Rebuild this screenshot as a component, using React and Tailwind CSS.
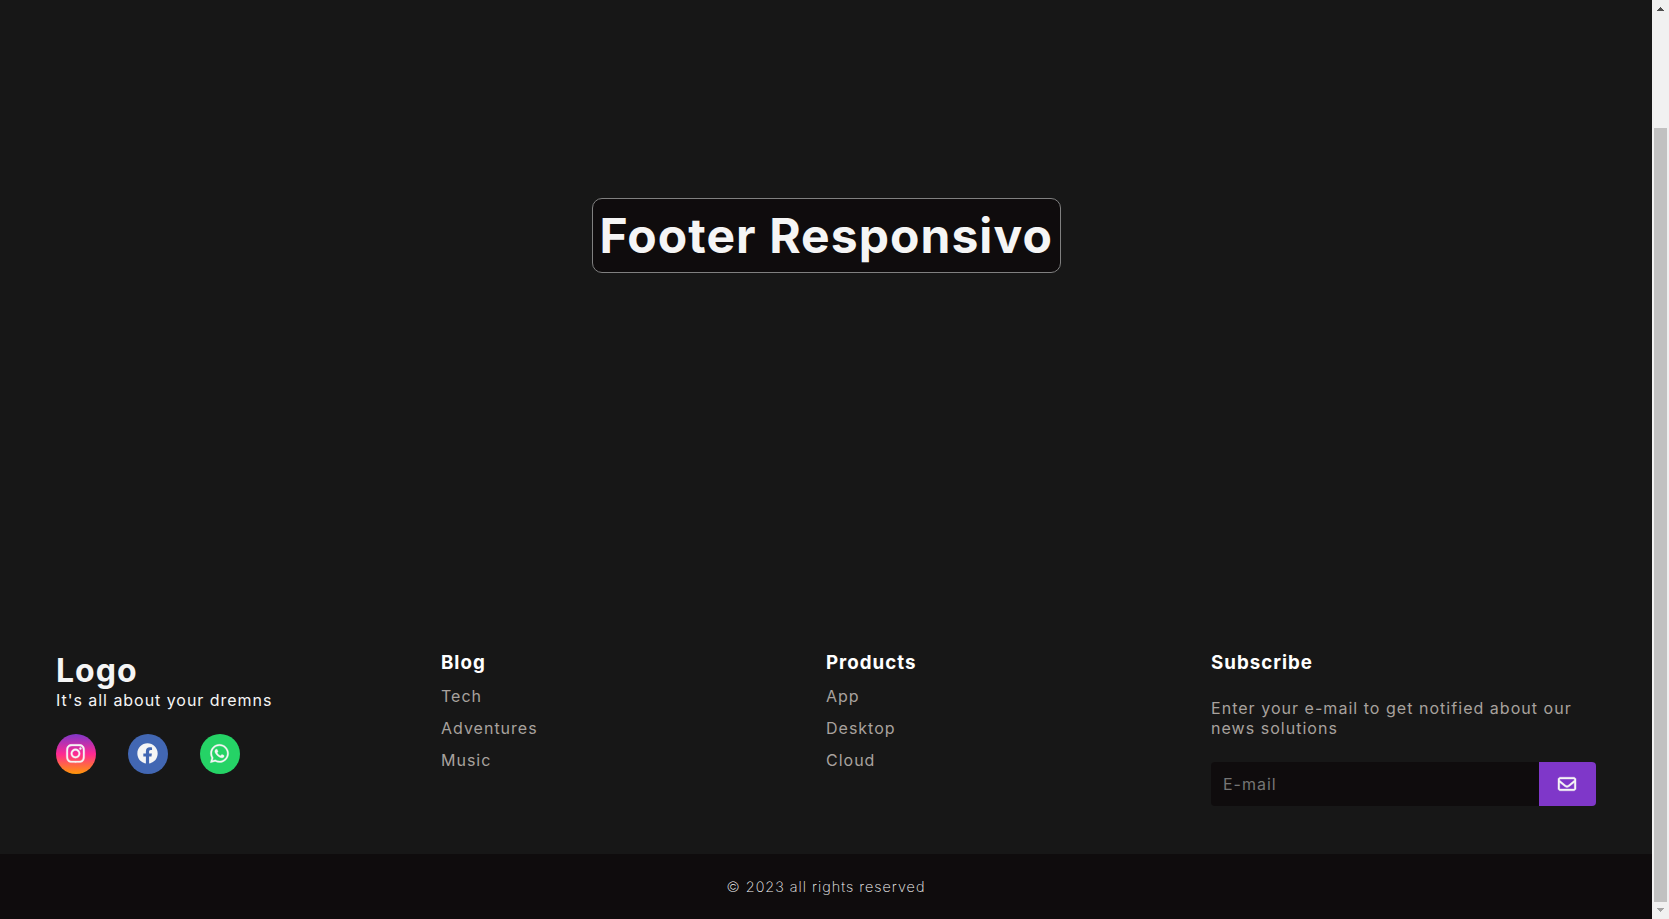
import { FaInstagram, FaWhatsapp, FaRegEnvelope } from "react-icons/fa6";
import { FaFacebook } from "react-icons/fa";

function LinkColumn({ title, links }) {
  return (
    <div className="flex w-[385px] flex-col pt-[1px]">
      <h3 className="h-[23px] text-[18.72px] font-bold leading-[23px] text-white">{title}</h3>
      <ul className="mt-[13px] flex flex-col gap-[13px]">
        {links.map((l) => (
          <li key={l} className="h-[19px] leading-[19px] text-[#a8a29e]">{l}</li>
        ))}
      </ul>
    </div>
  );
}

function Scrollbar() {
  return (
    <div className="flex w-[17px] flex-col items-center bg-[#f1f1f1]">
      <svg width="17" height="17" viewBox="0 0 17 17" fill="#505050" shapeRendering="crispEdges">
        <path d="M8 7h1v1h1v1h1v1h1v1H5v-1h1V9h1V8h1z" />
      </svg>
      <div className="mt-[111px] h-[774px] w-[13px] bg-[#c1c1c1]" />
      <svg width="17" height="17" viewBox="0 0 17 17" fill="#a3a3a3" shapeRendering="crispEdges">
        <path d="M5 6h7v1h-1v1h-1v1H9v1H8V9H7V8H6V7H5z" />
      </svg>
    </div>
  );
}

export default function App() {
  return (
    <div className="flex h-[919px] w-[1669px] overflow-hidden font-['Inter',sans-serif] text-[16px] tracking-[1px]">
      <div className="flex w-[1652px] flex-col bg-[#171717]">
        <main className="flex h-[650px] justify-center pt-[198px]">
          <h1 className="flex h-[75px] w-[469px] items-center whitespace-nowrap rounded-[10px] border border-[#808080] bg-[#0f0c0d] pl-[7px] text-[48px] font-bold leading-[58px] tracking-[1.05px] text-[#f5f5f5]">
            Footer Responsivo
          </h1>
        </main>
        <footer className="flex flex-1 flex-col">
          <div className="flex h-[204px] px-[56px]">
            <div className="flex w-[385px] flex-col text-[#f5f5f5]">
              <h2 className="mt-[1px] h-[39px] text-[32px] font-bold leading-[39px]">Logo</h2>
              <p className="h-[20px] leading-[20px] tracking-[0.96px]">It's all about your dremns</p>
              <div className="mt-[24px] flex gap-8 text-[21px]">
                <a className="flex size-10 items-center justify-center rounded-full bg-linear-to-b/srgb from-[#7f37c9] via-[#ff2992] to-[#ff9807] pr-px pb-px">
                  <FaInstagram strokeWidth={8} />
                </a>
                <a className="flex size-10 items-center justify-center rounded-full bg-[#4267b3] pr-px pb-px">
                  <FaFacebook />
                </a>
                <a className="flex size-10 items-center justify-center rounded-full bg-[#25d366] pr-px pb-px">
                  <FaWhatsapp strokeWidth={8} />
                </a>
              </div>
            </div>
            <LinkColumn title="Blog" links={["Tech", "Adventures", "Music"]} />
            <LinkColumn title="Products" links={["App", "Desktop", "Cloud"]} />
            <div className="flex w-[385px] flex-col pt-[1px]">
              <h3 className="h-[23px] text-[18.72px] font-bold leading-[23px] text-white">Subscribe</h3>
              <p className="mt-[24px] leading-[20px] tracking-[1.03px] text-[#a8a29e]">
                Enter your e-mail to get notified about our news solutions
              </p>
              <div className="mt-[24px] flex h-[44px] overflow-hidden rounded-[4px]">
                <input
                  type="email"
                  placeholder="E-mail"
                  className="w-[328px] bg-[#0f0c0d] px-3 tracking-[1px] text-[#f5f5f5] outline-none placeholder:text-[#757575]"
                />
                <button className="flex w-[57px] items-center justify-center bg-[#7f37c9] pr-[2px] text-[18px] text-[#f5f5f5]">
                  <FaRegEnvelope className="overflow-visible" strokeWidth={12} />
                </button>
              </div>
            </div>
          </div>
          <div className="flex h-[65px] items-center justify-center bg-[#0f0c0d] text-[14.4px] font-extralight text-[#f5f5f5]">
            © 2023 all rights reserved
          </div>
        </footer>
      </div>
      <Scrollbar />
    </div>
  );
}
